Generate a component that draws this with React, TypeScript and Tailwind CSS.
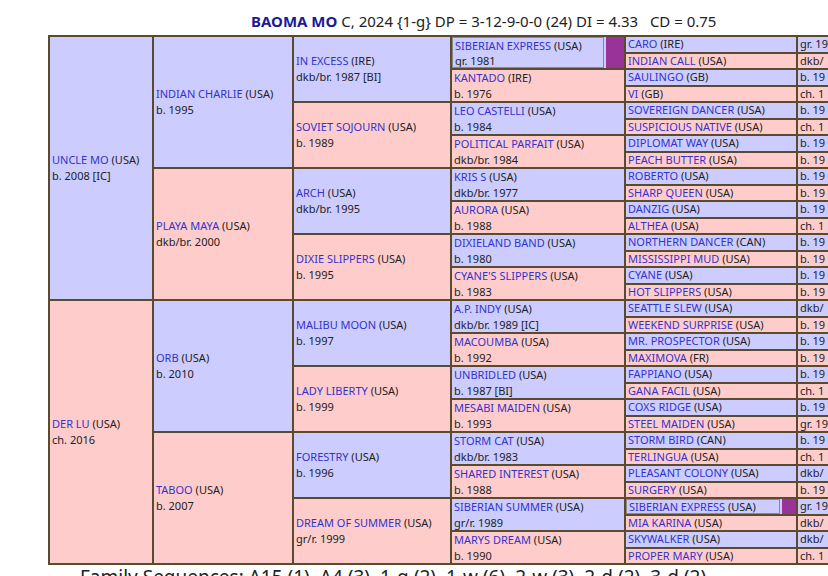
const B = "bg-[#ccccff]";
const P = "bg-[#ffcccc]";

type H = { n: string; c: string; d?: string; m?: boolean };

const g1: H[] = [
  { n: "UNCLE MO", c: "(USA)", d: "b. 2008 [IC]" },
  { n: "DER LU", c: "(USA)", d: "ch. 2016" },
];
const g2: H[] = [
  { n: "INDIAN CHARLIE", c: "(USA)", d: "b. 1995" },
  { n: "PLAYA MAYA", c: "(USA)", d: "dkb/br. 2000" },
  { n: "ORB", c: "(USA)", d: "b. 2010" },
  { n: "TABOO", c: "(USA)", d: "b. 2007" },
];
const g3: H[] = [
  { n: "IN EXCESS", c: "(IRE)", d: "dkb/br. 1987 [BI]" },
  { n: "SOVIET SOJOURN", c: "(USA)", d: "b. 1989" },
  { n: "ARCH", c: "(USA)", d: "dkb/br. 1995" },
  { n: "DIXIE SLIPPERS", c: "(USA)", d: "b. 1995" },
  { n: "MALIBU MOON", c: "(USA)", d: "b. 1997" },
  { n: "LADY LIBERTY", c: "(USA)", d: "b. 1999" },
  { n: "FORESTRY", c: "(USA)", d: "b. 1996" },
  { n: "DREAM OF SUMMER", c: "(USA)", d: "gr/r. 1999" },
];
const g4: H[] = [
  { n: "SIBERIAN EXPRESS", c: "(USA)", d: "gr. 1981", m: true },
  { n: "KANTADO", c: "(IRE)", d: "b. 1976" },
  { n: "LEO CASTELLI", c: "(USA)", d: "b. 1984" },
  { n: "POLITICAL PARFAIT", c: "(USA)", d: "dkb/br. 1984" },
  { n: "KRIS S", c: "(USA)", d: "dkb/br. 1977" },
  { n: "AURORA", c: "(USA)", d: "b. 1988" },
  { n: "DIXIELAND BAND", c: "(USA)", d: "b. 1980" },
  { n: "CYANE'S SLIPPERS", c: "(USA)", d: "b. 1983" },
  { n: "A.P. INDY", c: "(USA)", d: "dkb/br. 1989 [IC]" },
  { n: "MACOUMBA", c: "(USA)", d: "b. 1992" },
  { n: "UNBRIDLED", c: "(USA)", d: "b. 1987 [BI]" },
  { n: "MESABI MAIDEN", c: "(USA)", d: "b. 1993" },
  { n: "STORM CAT", c: "(USA)", d: "dkb/br. 1983" },
  { n: "SHARED INTEREST", c: "(USA)", d: "b. 1988" },
  { n: "SIBERIAN SUMMER", c: "(USA)", d: "gr/r. 1989" },
  { n: "MARYS DREAM", c: "(USA)", d: "b. 1990" },
];
const g5: H[] = [
  { n: "CARO", c: "(IRE)" }, { n: "INDIAN CALL", c: "(USA)" },
  { n: "SAULINGO", c: "(GB)" }, { n: "VI", c: "(GB)" },
  { n: "SOVEREIGN DANCER", c: "(USA)" }, { n: "SUSPICIOUS NATIVE", c: "(USA)" },
  { n: "DIPLOMAT WAY", c: "(USA)" }, { n: "PEACH BUTTER", c: "(USA)" },
  { n: "ROBERTO", c: "(USA)" }, { n: "SHARP QUEEN", c: "(USA)" },
  { n: "DANZIG", c: "(USA)" }, { n: "ALTHEA", c: "(USA)" },
  { n: "NORTHERN DANCER", c: "(CAN)" }, { n: "MISSISSIPPI MUD", c: "(USA)" },
  { n: "CYANE", c: "(USA)" }, { n: "HOT SLIPPERS", c: "(USA)" },
  { n: "SEATTLE SLEW", c: "(USA)" }, { n: "WEEKEND SURPRISE", c: "(USA)" },
  { n: "MR. PROSPECTOR", c: "(USA)" }, { n: "MAXIMOVA", c: "(FR)" },
  { n: "FAPPIANO", c: "(USA)" }, { n: "GANA FACIL", c: "(USA)" },
  { n: "COXS RIDGE", c: "(USA)" }, { n: "STEEL MAIDEN", c: "(USA)" },
  { n: "STORM BIRD", c: "(CAN)" }, { n: "TERLINGUA", c: "(USA)" },
  { n: "PLEASANT COLONY", c: "(USA)" }, { n: "SURGERY", c: "(USA)" },
  { n: "SIBERIAN EXPRESS", c: "(USA)", m: true }, { n: "MIA KARINA", c: "(USA)" },
  { n: "SKYWALKER", c: "(USA)" }, { n: "PROPER MARY", c: "(USA)" },
];
const g6 = [
  "gr. 19", "dkb/", "b. 19", "ch. 1", "b. 19", "ch. 1", "b. 19", "b. 19",
  "b. 19", "b. 19", "b. 19", "ch. 1", "b. 19", "b. 19", "b. 19", "b. 19",
  "dkb/", "b. 19", "b. 19", "b. 19", "b. 19", "ch. 1", "b. 19", "gr. 19",
  "b. 19", "ch. 1", "dkb/", "b. 19", "gr. 19", "dkb/", "dkb/", "ch. 1",
];

function Name({ h }: { h: H }) {
  return (
    <div className="whitespace-nowrap">
      <span className="text-[#3333cc]">{h.n}</span> {h.c}
    </div>
  );
}

function Cell({ h, col, row, span, i, center }: { h: H; col: number; row: number; span: number; i: number; center?: boolean }) {
  return (
    <div
      className={`${i % 2 === 0 ? B : P} px-[2px] flex flex-col ${center ? "justify-center" : ""} overflow-hidden leading-[16px]`}
      style={{ gridColumn: col, gridRow: `${row} / span ${span}` }}
    >
      <Name h={h} />
      {h.d && <div className="whitespace-nowrap">{h.d}</div>}
    </div>
  );
}

export default function App() {
  return (
    <div className="w-[828px] h-[576px] overflow-hidden bg-white text-[#222]">
      <div className="h-[35px] pl-[251px] pt-[11px] font-[family-name:'Liberation_Serif',serif] text-[15px] leading-[20px] whitespace-nowrap text-[#222]">
        <b className="text-[#1a1a99]">BAOMA MO</b> C, 2024 {"{1-g}"} DP = 3-12-9-0-0 (24) DI = 4.33&nbsp;&nbsp; CD = 0.75
      </div>
      <div
        className="ml-[48px] w-[780px] grid gap-[2px] bg-[#5a4a2e] border-2 border-r-0 border-[#5a4a2e] font-[family-name:'DejaVu_Sans',sans-serif] text-[11px] text-[#222]"
        style={{ gridTemplateColumns: "102px 138px 156px 172px 170px 1fr", gridTemplateRows: "repeat(32, 14.5px)" }}
      >
        {g1.map((h, i) => <Cell key={"a" + i} h={h} col={1} row={i * 16 + 1} span={16} i={i} center />)}
        {g2.map((h, i) => <Cell key={"b" + i} h={h} col={2} row={i * 8 + 1} span={8} i={i} center />)}
        {g3.map((h, i) => <Cell key={"c" + i} h={h} col={3} row={i * 4 + 1} span={4} i={i} center />)}
        {g4.map((h, i) =>
          h.m ? (
            <div key={"d" + i} className={`${B} flex`} style={{ gridColumn: 4, gridRow: `${i * 2 + 1} / span 2` }}>
              <div className="flex-1 border border-[#8a8a8a] px-[2px] leading-[15px] overflow-hidden">
                <Name h={h} />
                <div>{h.d}</div>
              </div>
              <div className="w-[18px] bg-[#993399] ml-[2px]" />
            </div>
          ) : (
            <Cell key={"d" + i} h={h} col={4} row={i * 2 + 1} span={2} i={i} />
          )
        )}
        {g5.map((h, i) => (
          <div
            key={"e" + i}
            className={`${i % 2 === 0 ? B : P} flex leading-[14px]`}
            style={{ gridColumn: 5, gridRow: i + 1 }}
          >
            {h.m ? (
              <>
                <div className="flex-1 border border-[#8a8a8a] px-[2px] overflow-hidden"><Name h={h} /></div>
                <div className="w-[14px] bg-[#993399] ml-[2px]" />
              </>
            ) : (
              <div className="px-[2px] overflow-hidden"><Name h={h} /></div>
            )}
          </div>
        ))}
        {g6.map((t, i) => (
          <div key={"f" + i} className={`${i % 2 === 0 ? B : P} px-[2px] leading-[14px] whitespace-nowrap`} style={{ gridColumn: 6, gridRow: i + 1 }}>
            {t}
          </div>
        ))}
      </div>
      <div className="pl-[80px] pt-[1px] font-[family-name:'Liberation_Serif',serif] text-[19px] leading-[22px] whitespace-nowrap">
        Family Sequences: A15 (1), A4 (3), 1-g (2), 1-w (6), 2-w (3), 2-d (2), 3-d (2)
      </div>
    </div>
  );
}
